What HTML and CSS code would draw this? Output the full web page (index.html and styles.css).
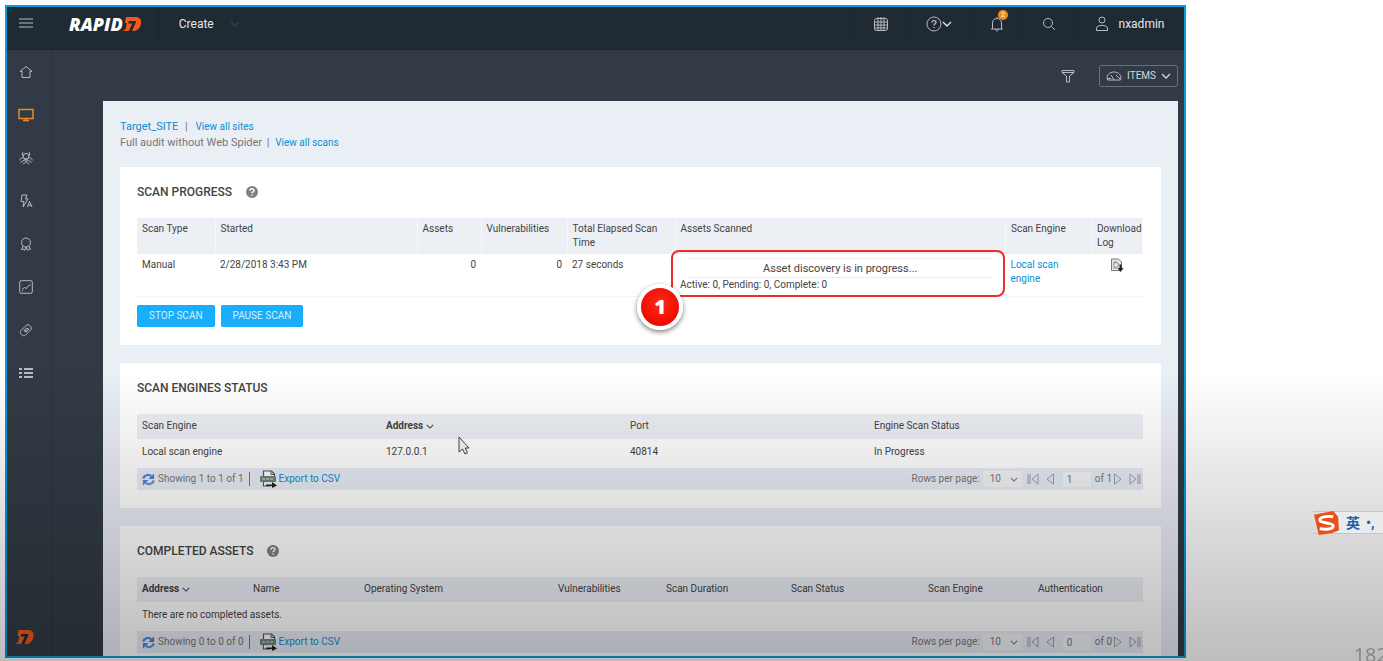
FILE: index.html
```html
<!DOCTYPE html>
<html lang="en">
  <head>
    <meta charset="UTF-8" />
    <meta name="viewport" content="width=device-width, initial-scale=1.0" />
    <title>Scan Progress</title>
    <link rel="stylesheet" href="styles.css" />
  </head>
  <body>
    <!-- Shared icons -->
    <svg class="sprite" aria-hidden="true">
      <symbol id="seven" viewBox="0 0 18 14">
        <path d="M2.500 0H12c4 0 6 2.500 5.500 6.200C17 10.800 14 14 9.500 14H0l.3-1.200H2L3.300 6H1.500z" fill="#f05a1e" stroke="none" />
        <path d="M5.200 4h7.300l-.3 1.700L8.500 14H5.300l3.500-7.500H4.800z" fill="#232a30" stroke="none" />
      </symbol>
      <symbol id="help" viewBox="0 0 12 12">
        <circle cx="6" cy="6" r="6" fill="#808080" />
        <path d="M4 4.700C4 2.200 8 2.200 8 4.500 8 5.900 6 5.900 6 7.300M6 8.400v1.400" fill="none" stroke="#fff" stroke-width="1.400" />
      </symbol>
      <symbol id="refresh" viewBox="0 0 14 14">
        <path d="M1.500 6C2 2.500 7 .8 10 3.500" fill="none" stroke="#4a86d8" stroke-width="2.400" />
        <path d="M13 .5v6H7z" fill="#3f7fd4" />
        <path d="M12.500 8C12 11.500 7 13.200 4 10.500" fill="none" stroke="#5d95de" stroke-width="2.400" />
        <path d="M1 13.500v-6h6z" fill="#4a86d8" />
      </symbol>
      <symbol id="csv" viewBox="0 0 17 18">
        <path d="M3.500 7V1h8l3 3v3M3.500 12v4h7" fill="#fff" stroke="#555" stroke-width="1.200" />
        <path d="M11 1v3.500h3.500" fill="none" stroke="#555" />
        <rect x="0" y="6" width="16" height="6" rx="1" fill="#6b8578" />
        <path d="M2 9h12" stroke="#b4c8bb" stroke-width="1.500" stroke-dasharray="3 1" />
        <path d="M6 14.500h6v-2.500l5 3.500-5 2.500v-2H6z" fill="#222" />
      </symbol>
      <symbol id="first" viewBox="0 0 12 12">
        <path d="M1 1v10M3 1v10M11 1v10L5 6z" fill="none" stroke="#9a9fab" />
      </symbol>
      <symbol id="prev" viewBox="0 0 12 12">
        <path d="M9.500 1v10L3 6z" fill="none" stroke="#9a9fab" />
      </symbol>
      <symbol id="caret" viewBox="0 0 10 6">
        <path d="M1 1l4 4 4-4" fill="none" stroke="currentColor" stroke-width="1.300" />
      </symbol>
    </svg>

    <div class="app">
      <header class="topbar">
        <button class="menu-btn" aria-label="Menu">
          <svg width="14" height="10" viewBox="0 0 14 10"><path d="M0 1h14M0 5h14M0 9h14" /></svg>
        </button>
        <a class="brand" href="#" aria-label="Rapid7">RAPID<svg class="brand-mark"><use href="#seven" /></svg></a>
        <button class="create-btn">Create <svg class="create-caret"><use href="#caret" /></svg></button>
        <nav class="top-actions">
          <button class="top-btn" aria-label="Calendar">
            <svg width="16" height="16" viewBox="0 0 16 16"><rect x="1.500" y="2.500" width="13" height="12" rx="2" /><path d="M1 6h14M1 9h14M1 12h14M5 1v13M8 1v13M11 1v13" /></svg>
          </button>
          <button class="top-btn top-help" aria-label="Help">
            <svg width="16" height="16" viewBox="0 0 16 16"><circle cx="8" cy="8" r="7" /><path d="M6 6.500C6 4 10 4 10 6.200 10 7.800 8 7.800 8 9.500M8 11v1" stroke-width="1.400" /></svg>
            <svg width="10" height="6"><use href="#caret" /></svg>
          </button>
          <button class="top-btn" aria-label="Notifications">
            <svg width="14" height="16" viewBox="0 0 14 16"><path d="M1 13h12M2.500 13V7c0-6 9-6 9 0v6M7 2V1M5.500 13c0 2.500 3 2.500 3 0" /></svg>
            <span class="badge">2</span>
          </button>
          <button class="top-btn" aria-label="Search">
            <svg width="14" height="14" viewBox="0 0 14 14"><circle cx="6" cy="6" r="4.500" /><path d="M9.500 9.500L13 13" /></svg>
          </button>
          <button class="top-btn top-user">
            <svg width="14" height="16" viewBox="0 0 14 16"><circle cx="7" cy="4" r="3" /><path d="M1.500 14.500V12c0-3.500 11-3.500 11 0v2.500z" /></svg>
            nxadmin
          </button>
        </nav>
      </header>

      <div class="workspace">
        <nav class="sidebar">
          <a href="#" aria-label="Home"><svg viewBox="0 0 14 14"><path d="M1 6.500L7 1.500l6 5H11V12.500H3V6.500z" /></svg></a>
          <a href="#" class="active" aria-label="Assets"><svg class="wide" viewBox="0 0 16 14"><path d="M1 1.500h14v9H1zM8 10.500v2M5 12.500h6" /></svg></a>
          <a href="#" aria-label="Vulnerabilities"><svg viewBox="0 0 14 14"><circle cx="7" cy="5.200" r="2.800" /><path d="M4.500.8C2.800 2 3 4 4.200 5.200M9.500.8C11.200 2 11 4 9.800 5.200M.8 9.500C1 7 3.500 6 5.500 7.500S7 12 4 13M13.200 9.500C13 7 10.500 6 8.500 7.500S7 12 10 13M1.500 11.500L7 8l5.500 3.500" /></svg></a>
          <a href="#" aria-label="Policies"><svg viewBox="0 0 14 14"><path d="M3 1h5L6.500 5H9l-5 8 1-5.500H2zM8.500 13l2-5.500 2.500 5.500M9.500 11.300h2.500" /></svg></a>
          <a href="#" aria-label="Awards"><svg viewBox="0 0 14 14"><circle cx="7" cy="5.500" r="4.500" /><path d="M4 9l-1.500 3.500 2-.5 1 1.500L7 10l1.500 3.500 1-1.500 2 .5L10 9" /></svg></a>
          <a href="#" aria-label="Reports"><svg viewBox="0 0 14 14"><rect x=".7" y=".7" width="12.600" height="12.600" rx="1.500" /><path d="M3 9.500l2.500-2 2 1 2-3L11.500 5M3 11h1" /></svg></a>
          <a href="#" aria-label="Tickets"><svg viewBox="0 0 14 14"><path d="M2 7.500l5-5c2.500-2.500 7 2 4.500 4.500l-5 5C4 14.500-.5 10 2 7.500zM5 7.500l2.500-2.500 2 1.500L7 9zM5.500 9l4-4" /></svg></a>
          <a href="#" aria-label="Administration"><svg viewBox="0 0 14 14"><path d="M0 3h3M5 3h9M0 7h3M5 7h9M0 11h3M5 11h9" stroke-width="2" /></svg></a>
          <a href="#" class="sidebar-logo" aria-label="Rapid7 home"><svg><use href="#seven" /></svg></a>
        </nav>

        <main class="main">
          <div class="toolbar">
            <button class="filter-btn" aria-label="Filter">
              <svg width="14" height="14" viewBox="0 0 14 14"><path d="M1 1.500h12v2L8.500 7v6h-3V7L1 3.500zM1 3.500h12" /></svg>
            </button>
            <button class="items-btn">
              <svg width="16" height="10" viewBox="0 0 16 10"><path d="M1.500 9C0 4 3.500 1 8 1s8 3 6.500 8zM1 7.500h4M8 9L5 4M10 4l4 4" /></svg>
              ITEMS
              <svg width="10" height="6"><use href="#caret" /></svg>
            </button>
          </div>

          <div class="panel">
            <div class="crumbs">
              <p><a class="site-link" href="#">Target_SITE</a> <span>|</span> <a href="#">View all sites</a></p>
              <p>Full audit without Web Spider <span>|</span> <a href="#">View all scans</a></p>
            </div>

            <!-- Scan progress -->
            <section class="card">
              <h2>SCAN PROGRESS <svg class="help-icon"><use href="#help" /></svg></h2>
              <table class="progress-table">
                <colgroup>
                  <col class="w-type" /><col class="w-started" /><col class="w-assets" /><col class="w-vulns" />
                  <col class="w-elapsed" /><col /><col class="w-vulns" /><col class="w-log" />
                </colgroup>
                <thead>
                  <tr>
                    <th>Scan Type</th>
                    <th>Started</th>
                    <th>Assets</th>
                    <th>Vulnerabilities</th>
                    <th>Total Elapsed Scan Time</th>
                    <th>Assets Scanned</th>
                    <th>Scan Engine</th>
                    <th>Download Log</th>
                  </tr>
                </thead>
                <tbody>
                  <tr>
                    <td>Manual</td>
                    <td>2/28/2018 3:43 PM</td>
                    <td class="num">0</td>
                    <td class="num">0</td>
                    <td>27 seconds</td>
                    <td class="scanned">
                      <div class="callout"><span class="callout-number">1</span></div>
                      <div class="progress-text">Asset discovery is in progress...</div>
                      <div>Active: 0, Pending: 0, Complete: 0</div>
                    </td>
                    <td><a href="#">Local scan engine</a></td>
                    <td class="log">
                      <a href="#" aria-label="Download log">
                        <svg width="14" height="14" viewBox="0 0 14 14"><path d="M1.500 1h7l3 3v8.500h-10z" fill="#e4e6ea" stroke="#777" /><path d="M3 4h4M3 10h4" stroke="#999" /><circle cx="6" cy="7" r="2.500" fill="none" stroke="#888" /><path d="M9.500 6.500h2V10h2l-3 4-3-4h2z" fill="#222" /></svg>
                      </a>
                    </td>
                  </tr>
                </tbody>
              </table>
              <div class="actions">
                <button class="action-btn">STOP SCAN</button>
                <button class="action-btn">PAUSE SCAN</button>
              </div>
            </section>

            <!-- Scan engines -->
            <section class="card">
              <h2>SCAN ENGINES STATUS</h2>
              <table class="list-table">
                <colgroup>
                  <col class="w-engine" /><col class="w-engine" /><col class="w-engine" /><col />
                </colgroup>
                <thead>
                  <tr>
                    <th>Scan Engine</th>
                    <th class="sorted">Address <svg class="sort-icon"><use href="#caret" /></svg></th>
                    <th>Port</th>
                    <th>Engine Scan Status</th>
                  </tr>
                </thead>
                <tbody>
                  <tr>
                    <td>Local scan engine</td>
                    <td class="pointed">
                      127.0.0.1
                      <svg class="cursor" viewBox="0 0 12 19"><path d="M1 1v15l3.500-3 2.500 5 2.500-1.200L7.200 12H11z" fill="#f6f6f6" stroke="#444" /></svg>
                    </td>
                    <td>40814</td>
                    <td>In Progress</td>
                  </tr>
                </tbody>
              </table>
              <div class="pager">
                <button class="icon-btn" aria-label="Refresh engines"><svg class="refresh-icon"><use href="#refresh" /></svg></button>
                <span class="showing">Showing 1 to 1 of 1</span>
                <a class="export" href="#"><svg class="csv-icon"><use href="#csv" /></svg>Export to CSV</a>
                <div class="pager-nav">
                  <label for="engineRows">Rows per page:</label>
                  <span class="rows-select"><select id="engineRows"><option>10</option></select><svg><use href="#caret" /></svg></span>
                  <button class="icon-btn" aria-label="First page"><svg><use href="#first" /></svg></button>
                  <button class="icon-btn" aria-label="Previous page"><svg><use href="#prev" /></svg></button>
                  <input type="text" value="1" aria-label="Engines page" />
                  <span class="of">of 1</span>
                  <button class="icon-btn flip" aria-label="Next page"><svg><use href="#prev" /></svg></button>
                  <button class="icon-btn flip" aria-label="Last page"><svg><use href="#first" /></svg></button>
                </div>
              </div>
            </section>

            <!-- Completed assets -->
            <section class="card">
              <h2>COMPLETED ASSETS <svg class="help-icon"><use href="#help" /></svg></h2>
              <table class="list-table">
                <colgroup>
                  <col class="w-name" /><col class="w-name" /><col class="w-os" /><col class="w-elapsed" />
                  <col class="w-status" /><col /><col class="w-auth" /><col class="w-auth" />
                </colgroup>
                <thead>
                  <tr>
                    <th class="sorted">Address <svg class="sort-icon"><use href="#caret" /></svg></th>
                    <th>Name</th>
                    <th>Operating System</th>
                    <th>Vulnerabilities</th>
                    <th>Scan Duration</th>
                    <th>Scan Status</th>
                    <th>Scan Engine</th>
                    <th>Authentication</th>
                  </tr>
                </thead>
                <tbody>
                  <tr>
                    <td colspan="8">There are no completed assets.</td>
                  </tr>
                </tbody>
              </table>
              <div class="pager">
                <button class="icon-btn" aria-label="Refresh assets"><svg class="refresh-icon"><use href="#refresh" /></svg></button>
                <span class="showing">Showing 0 to 0 of 0</span>
                <a class="export" href="#"><svg class="csv-icon"><use href="#csv" /></svg>Export to CSV</a>
                <div class="pager-nav">
                  <label for="assetRows">Rows per page:</label>
                  <span class="rows-select"><select id="assetRows"><option>10</option></select><svg><use href="#caret" /></svg></span>
                  <button class="icon-btn" aria-label="First page"><svg><use href="#first" /></svg></button>
                  <button class="icon-btn" aria-label="Previous page"><svg><use href="#prev" /></svg></button>
                  <input type="text" value="0" aria-label="Assets page" />
                  <span class="of">of 0</span>
                  <button class="icon-btn flip" aria-label="Next page"><svg><use href="#prev" /></svg></button>
                  <button class="icon-btn flip" aria-label="Last page"><svg><use href="#first" /></svg></button>
                </div>
              </div>
            </section>
          </div>
        </main>
      </div>
    </div>

    <!-- Floating input method bar -->
    <div class="ime">
      <svg class="ime-logo" viewBox="0 0 28 27">
        <path d="M1 5L21 1l5 6 1 14-7 3-14 2z" fill="#e8521a" />
        <path d="M21 7C14 6 7 7 7 10.500c0 4 14 2 14 6 0 3.500-8 4-14 3" fill="none" stroke="#fff" stroke-width="3" />
      </svg>
      <span>英</span>
      <span class="ime-dot">•,</span>
    </div>
    <div class="page-number">182</div>
  </body>
</html>
```
FILE: styles.css
```css
* {
  margin: 0;
  padding: 0;
  box-sizing: border-box;
}

body {
  display: flex;
  height: 100vh;
  padding: 5px 197px 3px 5px;
  overflow: hidden;
  background-color: #fff;
  font-family: Roboto, "Noto Sans CJK SC", sans-serif;
  font-size: 10px;
  line-height: 14px;
  color: #444;
}

/* Shade that darkens the lower part of the slide */
body::after {
  content: "";
  position: fixed;
  inset: 56% 0 0 0;
  background: linear-gradient(rgba(0, 0, 0, 0), rgba(0, 0, 0, 0.26));
  pointer-events: none;
}

a {
  color: #0b8fd0;
  text-decoration: none;
}

button,
input,
select {
  font: inherit;
  color: inherit;
  background: none;
  border: none;
}

button {
  cursor: pointer;
}

.sprite {
  display: none;
}

.app {
  flex: 1;
  display: flex;
  flex-direction: column;
  min-width: 0;
  border: 2px solid #0a9bdc;
  background-color: #323b45;
  overflow: hidden;
}

/* Top bar */
.topbar {
  display: flex;
  align-items: center;
  height: 43px;
  padding-bottom: 8px;
  flex-shrink: 0;
  background-color: #202a33;
  border-bottom: 1px solid #1a232b;
  color: #e3e7ea;
  font-size: 12px;
}

.topbar svg,
.toolbar svg,
.sidebar svg {
  fill: none;
  stroke: #b4bbc1;
}

.menu-btn {
  width: 38px;
}

.brand {
  display: flex;
  align-items: center;
  margin-left: 24px;
  padding-right: 16px;
  border-right: 1px solid #1a232b;
  color: #fff;
  font-family: "Open Sans", sans-serif;
  font-size: 18px;
  font-weight: 800;
  font-style: italic;
  line-height: 34px;
}

.brand .brand-mark {
  width: 19px;
  height: 14px;
}

.create-btn {
  display: flex;
  align-items: center;
  gap: 16px;
  margin-left: 20px;
}

.topbar .create-caret {
  width: 10px;
  height: 6px;
  color: #34404a;
}

.top-actions {
  display: flex;
  margin-left: auto;
}

.top-btn {
  position: relative;
  display: flex;
  align-items: center;
  justify-content: center;
  width: 52px;
  height: 34px;
  border-left: 1px solid #1d262e;
}

.top-help {
  width: 64px;
}

.top-user {
  width: 110px;
  gap: 10px;
}

.badge {
  position: absolute;
  top: 3px;
  right: 14px;
  width: 10px;
  height: 10px;
  border-radius: 50%;
  background-color: #f08a24;
  color: #fff;
  font-size: 7px;
  line-height: 10px;
}

.workspace {
  flex: 1;
  display: flex;
  min-height: 0;
}

/* Sidebar */
.sidebar {
  display: flex;
  flex-direction: column;
  width: 46px;
  padding-right: 7px;
  border-right: 1px solid #2c353e;
}

.sidebar a {
  display: flex;
  align-items: center;
  justify-content: center;
  height: 43px;
}

.sidebar svg {
  width: 14px;
  height: 14px;
}

.sidebar .wide {
  width: 16px;
}

.sidebar .active svg {
  stroke: #e88a2a;
  stroke-width: 1.5;
}

.sidebar .sidebar-logo {
  margin-top: auto;
  padding-right: 2px;
  height: 38px;
}

.sidebar .sidebar-logo svg {
  width: 18px;
}

/* Main area */
.main {
  flex: 1;
  display: flex;
  flex-direction: column;
  min-width: 0;
  padding: 0 6px 0 50px;
}

.toolbar {
  display: flex;
  align-items: center;
  justify-content: flex-end;
  gap: 24px;
  height: 51px;
  flex-shrink: 0;
  color: #d5d9dd;
}

.toolbar button {
  display: flex;
  align-items: center;
}

.items-btn {
  height: 22px;
  padding: 0 6px;
  gap: 5px;
  border: 1px solid #69727b;
  border-radius: 2px;
}

.panel {
  flex: 1;
  display: flex;
  flex-direction: column;
  gap: 18px;
  padding: 18px 17px;
  overflow: hidden;
  background-color: #eaeef5;
}

.crumbs {
  height: 30px;
  color: #777;
  font-size: 11px;
  line-height: 16px;
}

.crumbs a {
  font-size: 10px;
}

.crumbs .site-link {
  font-size: 11px;
}

.crumbs span {
  margin: 0 3px 0 2px;
}

.crumbs .site-link + span {
  margin: 0 5px 0 4px;
}

/* Cards */
.card {
  flex-shrink: 0;
  padding: 16px 18px 18px 17px;
  background-color: #fff;
}

h2 {
  display: flex;
  align-items: center;
  gap: 14px;
  height: 18px;
  margin-bottom: 17px;
  font-size: 12px;
  font-weight: 500;
}

.help-icon {
  width: 12px;
  height: 12px;
}

table {
  width: 100%;
  table-layout: fixed;
  border-collapse: collapse;
}

th {
  padding: 4px 5px;
  background-color: #eceff4;
  font-weight: 400;
  text-align: left;
  vertical-align: top;
}

td {
  padding: 4px 5px;
  vertical-align: top;
}

.progress-table th {
  border-right: 1px solid #f5f7fb;
}

.progress-table td {
  border-bottom: 1px solid #f6f6f6;
}

.list-table th {
  height: 25px;
  padding: 5px 5px 6px;
}

.list-table td {
  height: 29px;
  padding: 6px 5px 9px;
}

.w-type {
  width: 78px;
}

.w-started {
  width: 202px;
}

.w-assets {
  width: 64px;
}

.w-vulns {
  width: 86px;
}

.w-elapsed {
  width: 108px;
}

.w-log {
  width: 51px;
}

.w-engine {
  width: 244px;
}

.w-name {
  width: 111px;
}

.w-auth {
  width: 110px;
}

.w-os {
  width: 194px;
}

.w-status {
  width: 125px;
}

.num {
  text-align: right;
}

.log {
  text-align: center;
}

.sorted {
  font-weight: 700;
}

.sort-icon {
  width: 8px;
  height: 5px;
}

.scanned,
.pointed {
  position: relative;
}

.progress-text {
  height: 20px;
  margin: 0 8px;
  border-top: 1px solid #ececec;
  border-bottom: 1px solid #ececec;
  font-size: 11px;
  line-height: 20px;
  text-align: center;
}

/* Red marker around the live status */
.callout {
  position: absolute;
  inset: -4px 1px -1px -4px;
  border: 2px solid #ee2b2b;
  border-radius: 8px;
}

.callout-number {
  position: absolute;
  left: -36px;
  bottom: -35px;
  width: 46px;
  height: 46px;
  border: 4px solid #fff;
  border-radius: 50%;
  background: radial-gradient(circle at 50% 40%, #ff2a1a, #f00a00 70%);
  box-shadow: 0 2px 5px rgba(0, 0, 0, 0.5);
  color: #fff;
  font-family: "Open Sans", sans-serif;
  font-size: 20px;
  font-weight: 800;
  line-height: 37px;
  text-align: center;
}

.cursor {
  position: absolute;
  top: -3px;
  left: 77px;
  width: 12px;
  height: 19px;
}

.actions {
  display: flex;
  gap: 6px;
  margin-top: 8px;
}

.action-btn {
  height: 22px;
  padding: 0 12px;
  border-radius: 2px;
  background-color: #18aefb;
  color: #d2effe;
}

/* Table footer */
.pager {
  display: flex;
  align-items: center;
  height: 22px;
  padding: 0 2px 0 5px;
  background-color: #e8ecf4;
  color: #777;
}

.icon-btn,
.export {
  display: flex;
  align-items: center;
}

.refresh-icon {
  width: 13px;
  height: 13px;
}

.showing {
  margin-left: 3px;
  padding-right: 5px;
  border-right: 1px solid #777;
}

.export {
  gap: 2px;
  margin-left: 10px;
}

.csv-icon {
  width: 17px;
  height: 18px;
}

.pager-nav {
  display: flex;
  align-items: center;
  margin-left: auto;
}

.pager-nav .icon-btn svg {
  width: 12px;
  height: 12px;
}

.pager-nav .icon-btn {
  margin-left: 5px;
}

.rows-select {
  display: flex;
  align-items: center;
  width: 39px;
  height: 16px;
  margin-left: 3px;
  background-color: #f2f4f7;
}

.rows-select select {
  flex: 1;
  padding-left: 7px;
  appearance: none;
}

.rows-select svg {
  width: 8px;
  height: 5px;
  margin-right: 4px;
}

.pager-nav input {
  width: 28px;
  height: 15px;
  margin-left: 7px;
  padding-left: 4px;
  background-color: #f2f4f7;
}

.of {
  margin-left: 4px;
}

.pager-nav .of + .icon-btn {
  margin-left: 0;
}

.flip svg {
  transform: scaleX(-1);
}

/* Overlays on the right of the slide */
.ime {
  position: fixed;
  right: 0;
  bottom: 127px;
  display: flex;
  align-items: center;
  gap: 6px;
  width: 70px;
  height: 23px;
  z-index: 1;
  color: #1763ac;
  font-size: 14px;
  font-weight: 700;
  background: linear-gradient(#e9ebed, #e9ebed) 14px 0 no-repeat;
  border-top: 1px solid #c3c5cb;
  border-bottom: 1px solid #c3c5cb;
}

.ime-logo {
  width: 27px;
  height: 26px;
  flex-shrink: 0;
}

.page-number {
  position: fixed;
  right: -5px;
  bottom: -8px;
  z-index: 1;
  color: #858585;
  font-family: "Open Sans", sans-serif;
  font-size: 20px;
  line-height: 28px;
}
```
